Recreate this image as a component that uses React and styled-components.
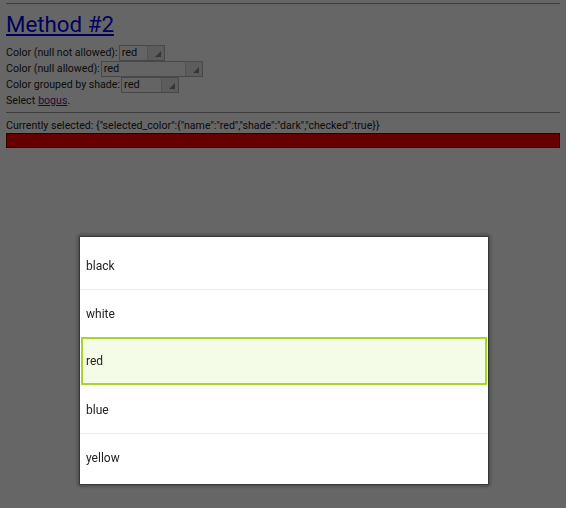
import React from 'react'
import styled, { createGlobalStyle } from 'styled-components'

const Global = createGlobalStyle`
  html, body { margin: 0; padding: 0; background: #fff; }
  body {
    font: 10.6px/16px Roboto, "Liberation Sans", sans-serif;
    color: #222;
    padding: 0 6px;
  }
`

const Rule = styled.div`
  border-top: 1px solid #999;
  margin: ${p => p.top}px 0 ${p => p.bottom}px;
`

const Heading = styled.a`
  display: inline-block;
  font: 400 22.3px/30px Roboto, "Liberation Sans", sans-serif;
  color: #0000ee;
  text-decoration: underline;
  margin: 5px 0 6px 0;
`

const Form = styled.div`
  display: flex;
  flex-direction: column;
`

const Line = styled.div`
  display: flex;
  align-items: center;
  height: 16px;
  white-space: nowrap;
`

const Select = styled.div`
  display: flex;
  width: ${p => p.w}px;
  height: 16px;
  box-sizing: border-box;
  margin-left: 1px;
  border: 1px solid #b5b5b5;
  background: #fafafa;
`

const SelectValue = styled.span`
  flex: 1;
  padding-left: 2px;
  line-height: 14px;
  font-size: 11px;
`

const SelectArrow = styled.span`
  width: 16px;
  background: #e6e6e6;
  border-left: 1px solid #d0d0d0;
  position: relative;
  &::after {
    content: '';
    position: absolute;
    right: 3px;
    bottom: 3px;
    border-style: solid;
    border-width: 0 0 6px 6px;
    border-color: transparent transparent #8a8a8a transparent;
  }
`

const Visited = styled.a`
  color: #551a8b;
  text-decoration: underline;
  margin-left: 3px;
`

const Selected = styled.div`
  line-height: 14px;
  white-space: nowrap;
`

const Swatch = styled.div`
  height: 15px;
  box-sizing: border-box;
  background: #ff0000;
  border: 1px solid #800000;
`

const Overlay = styled.div`
  position: fixed;
  inset: 0;
  background: rgba(0, 0, 0, 0.6);
`

const Dialog = styled.div`
  position: absolute;
  left: 80px;
  top: 237px;
  width: 408px;
  box-sizing: border-box;
  padding: 4px 0 3px;
  background: #fff;
  box-shadow: 0 0 0 1px rgba(0, 0, 0, 0.25), 0 0 4px 2px rgba(0, 0, 0, 0.35);
`

const Option = styled.div`
  height: 48px;
  box-sizing: border-box;
  display: flex;
  align-items: center;
  padding-left: 6px;
  font: 12px Roboto, "Liberation Sans", sans-serif;
  color: #222;
  border-top: 1px solid ${p => (p.first ? 'transparent' : '#ececec')};
  ${p => p.active && `
    margin: 0 1px;
    padding-left: 3px;
    background: #f4fce8;
    border: 2px solid #a8d42c;
  `}
`

const options = ['black', 'white', 'red', 'blue', 'yellow']

export default function App() {
  return (
    <>
      <Global />
      <Rule top={3} bottom={0} />
      <Heading href="#">Method #2</Heading>
      <Form>
        <Line>
          Color (null not allowed):
          <Select w={46}>
            <SelectValue>red</SelectValue>
            <SelectArrow />
          </Select>
        </Line>
        <Line>
          Color (null allowed):
          <Select w={102}>
            <SelectValue>red</SelectValue>
            <SelectArrow />
          </Select>
        </Line>
        <Line>
          Color grouped by shade:
          <Select w={58}>
            <SelectValue>red</SelectValue>
            <SelectArrow />
          </Select>
        </Line>
        <Line>
          Select<Visited href="#">bogus</Visited>.
        </Line>
      </Form>
      <Rule top={3} bottom={6} />
      <Selected>
        Currently selected: {'{"selected_color":{"name":"red","shade":"dark","checked":true}}'}
      </Selected>
      <Swatch />
      <Overlay>
        <Dialog>
          {options.map((o, i) => (
            <Option key={o} first={i === 0 || i === 3} active={o === 'red'}>
              {o}
            </Option>
          ))}
        </Dialog>
      </Overlay>
    </>
  )
}
